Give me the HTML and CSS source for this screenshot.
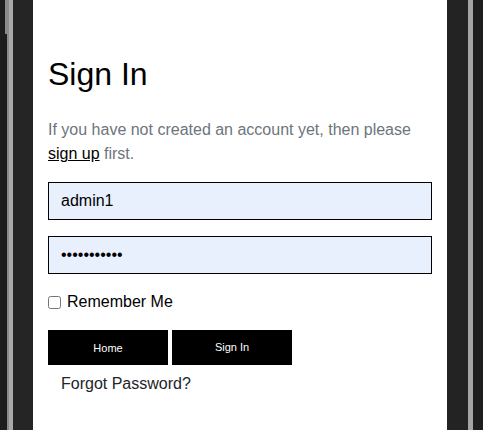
FILE: index.html
```html
<!DOCTYPE html>
<html lang="en">
<head>
<meta charset="utf-8">
<title>Sign In</title>
<link rel="stylesheet" href="styles.css">
</head>
<body>
<div class="frame">
  <div class="gutter gutter-left"><span class="thumb"></span></div>
  <main class="panel">
    <h1 class="title">Sign In</h1>
    <p class="lead">If you have not created an account yet, then please <a class="link" href="#">sign up</a> first.</p>
    <form class="form">
      <input class="field" type="text" value="admin1">
      <input class="field" type="password" value="password123">
      <label class="remember"><input class="check" type="checkbox"> Remember Me</label>
      <div class="actions">
        <button class="btn btn-home" type="button">Home</button>
        <button class="btn btn-submit" type="button">Sign In</button>
      </div>
      <a class="forgot" href="#">Forgot Password?</a>
    </form>
  </main>
  <div class="gutter gutter-right"></div>
</div>
</body>
</html>
```
FILE: styles.css
```css
* { box-sizing: border-box; }
html, body {
  margin: 0;
  height: 100%;
  background: #232323;
  font-family: "Liberation Sans", Arial, sans-serif;
}
.frame {
  display: flex;
  height: 430px;
  overflow: hidden;
}
.gutter {
  flex: none;
  height: 100%;
  position: relative;
}
.gutter-left {
  width: 33px;
  background: linear-gradient(to right,
    #1d1d1d 0, #1d1d1d 7px,
    #8a8a8a 7px, #8a8a8a 9px,
    #a9a9a9 9px, #a9a9a9 13px,
    #252525 13px, #252525 33px);
}
.gutter-left .thumb {
  position: absolute;
  left: 5px;
  top: 0;
  width: 3px;
  height: 34px;
  background: #8a8a8a;
}
.gutter-right {
  width: 36px;
  background: linear-gradient(to right,
    #232323 0, #232323 21px,
    #a4a4a4 21px, #a4a4a4 26px,
    #1d1d1d 26px, #1d1d1d 36px);
}
.panel {
  flex: none;
  width: 414px;
  height: 100%;
  background: #fff;
  padding: 55px 15px 0;
}
.title {
  margin: 0 0 25px;
  font-size: 32px;
  font-weight: 400;
  line-height: 1.2;
  color: #000;
}
.lead {
  margin: 0 0 16px;
  font-size: 16px;
  line-height: 24px;
  color: #6c757d;
}
.link {
  color: #000;
  text-decoration: underline;
}
.form {
  display: flex;
  flex-direction: column;
  align-items: flex-start;
}
.field {
  width: 384px;
  height: 38px;
  margin: 0 0 16px;
  padding: 0 12px;
  border: 1px solid #000;
  border-radius: 0;
  background: #e8f0fe;
  font-family: "Liberation Sans", Arial, sans-serif;
  font-size: 16px;
  color: #000;
  outline: none;
}
.remember {
  display: flex;
  align-items: center;
  margin-top: 0;
  font-size: 16px;
  line-height: 24px;
  color: #000;
}
.check {
  margin: 0 6px 0 0;
  width: 13px;
  height: 13px;
}
.actions {
  display: flex;
  gap: 4px;
  margin-top: 16px;
}
.btn {
  width: 120px;
  height: 35px;
  border: none;
  border-radius: 0;
  background: #000;
  color: #fff;
  font-family: "Liberation Sans", Arial, sans-serif;
  font-size: 11px;
  padding: 0;
}
.btn-home {
  padding-top: 1px;
}
.btn-submit {
  padding-bottom: 1px;
}
.forgot {
  margin-top: 7px;
  padding-left: 13px;
  font-size: 16px;
  line-height: 24px;
  color: #212529;
  text-decoration: none;
}
```
